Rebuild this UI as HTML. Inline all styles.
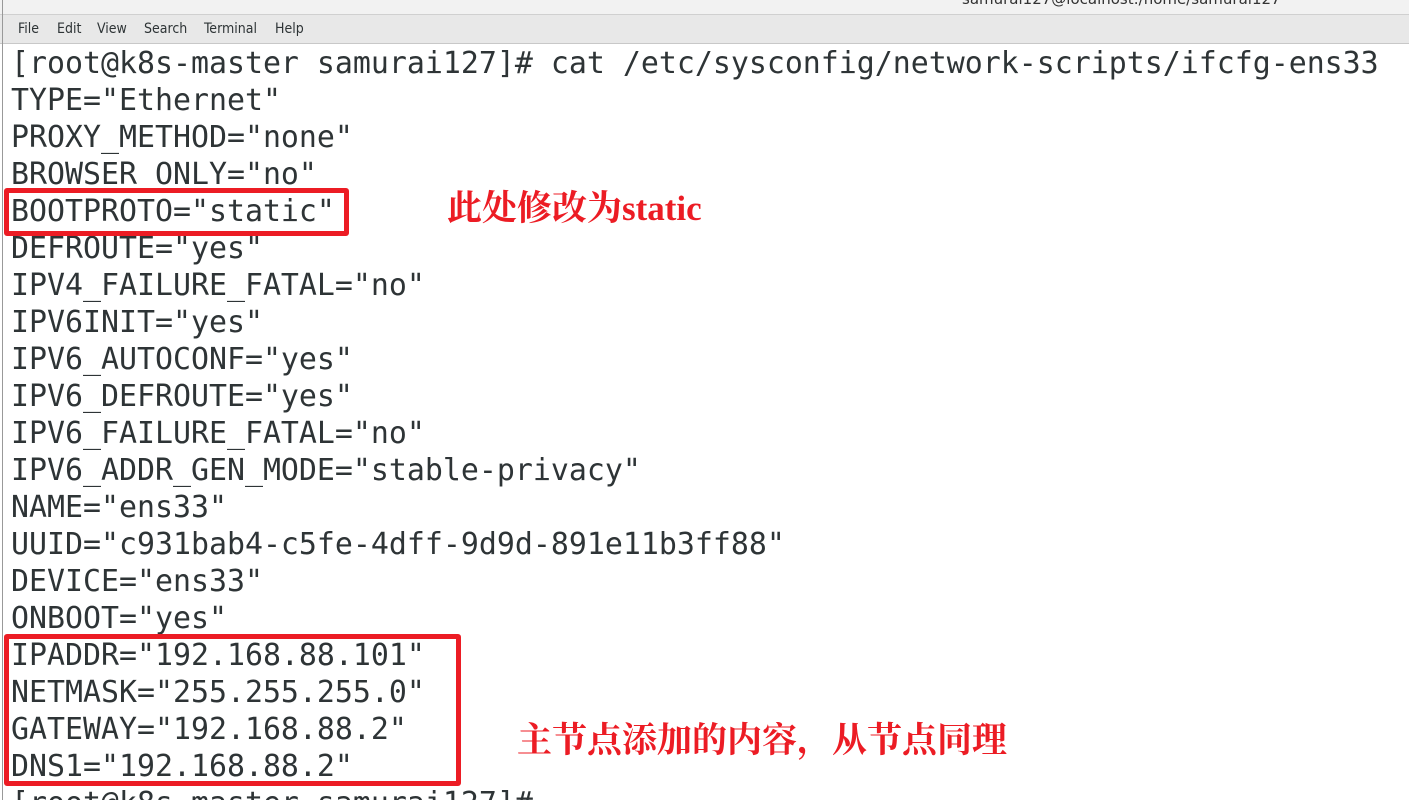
<!DOCTYPE html>
<html><head><meta charset="utf-8"><style>
html,body{margin:0;width:1409px;height:800px;overflow:hidden}
body{background:#fff;position:relative;font-family:"DejaVu Sans Mono","Liberation Mono",monospace}
.title{position:absolute;left:0;top:0;width:1409px;height:14px;background:#f2f2f2;border-bottom:1px solid #d0d0d0;overflow:hidden}
.title span{position:absolute;left:962px;top:-10px;font:15px "DejaVu Sans","Liberation Sans",sans-serif;color:#333}
.menu{position:absolute;left:0;top:15px;width:1409px;height:28px;background:#e8e8e8;border-bottom:1px solid #c8c8c8;font:14px "DejaVu Sans Condensed","DejaVu Sans","Liberation Sans",sans-serif;color:#2e3436}
.menu span{position:absolute;top:6px}
.lb{position:absolute;left:2px;top:0;width:1px;height:800px;background:#999}
pre{position:absolute;left:11px;top:45px;margin:0;font:29.9px/37px "DejaVu Sans Mono",monospace;color:#2e3436;letter-spacing:0}
.box{position:absolute;border:5px solid #ec1c24;border-radius:3px}
.ann{position:absolute;color:#ec1c24;font-weight:bold;font-family:"Liberation Serif","Noto Serif CJK SC",serif;white-space:nowrap}
</style></head><body>
<div class="title"><span>samurai127@localhost:/home/samurai127</span></div>
<div class="menu"><span style="left:18px">File</span><span style="left:57px">Edit</span><span style="left:97px">View</span><span style="left:144px">Search</span><span style="left:204px">Terminal</span><span style="left:275px">Help</span></div>
<div class="lb"></div>
<pre>[root@k8s-master samurai127]# cat /etc/sysconfig/network-scripts/ifcfg-ens33
TYPE="Ethernet"
PROXY_METHOD="none"
BROWSER_ONLY="no"
BOOTPROTO="static"
DEFROUTE="yes"
IPV4_FAILURE_FATAL="no"
IPV6INIT="yes"
IPV6_AUTOCONF="yes"
IPV6_DEFROUTE="yes"
IPV6_FAILURE_FATAL="no"
IPV6_ADDR_GEN_MODE="stable-privacy"
NAME="ens33"
UUID="c931bab4-c5fe-4dff-9d9d-891e11b3ff88"
DEVICE="ens33"
ONBOOT="yes"
IPADDR="192.168.88.101"
NETMASK="255.255.255.0"
GATEWAY="192.168.88.2"
DNS1="192.168.88.2"
[root@k8s-master samurai127]#</pre>
<div class="box" style="left:4px;top:188px;width:335px;height:38px"></div>
<div class="box" style="left:4px;top:634px;width:447px;height:142px"></div>
<div class="ann" style="left:447px;top:181px;font-size:35px">此处修改为static</div>
<div class="ann" style="left:517px;top:713px;font-size:35px">主节点添加的内容，从节点同理</div>
</body></html>
